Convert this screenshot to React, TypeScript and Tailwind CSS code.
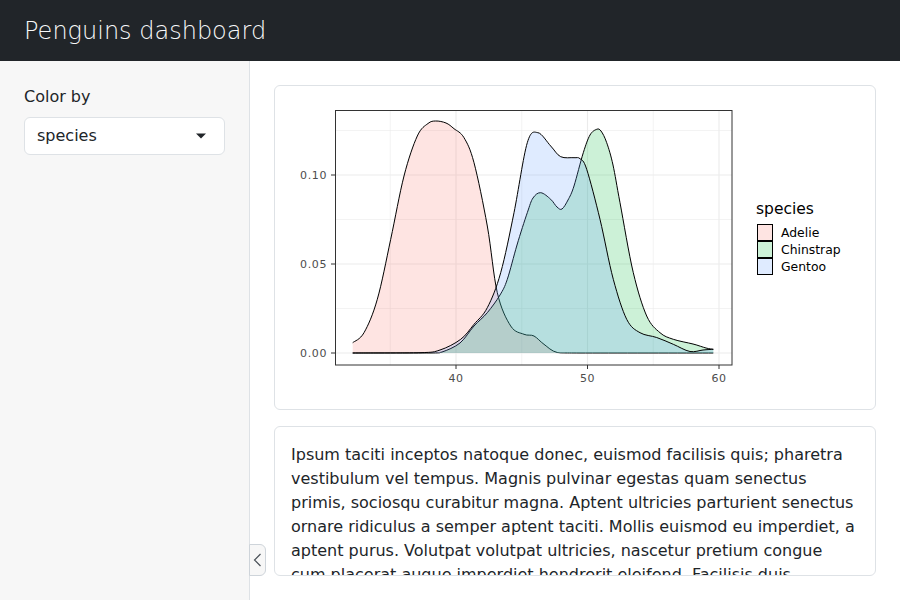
import React from "react"

type Pt = [number, number]

const BASE = 353

const adelie: Pt[] = [
  [352.7, 342.7], [364, 332.7], [377.3, 299.3], [390.7, 239.3], [404, 176], [417.3, 136],
  [428, 123.5], [435.7, 121], [446, 123], [454, 128.7], [464, 137.7], [474, 162.7],
  [487.3, 226], [497.3, 292.7], [510.7, 326], [524, 334.3], [534, 336], [544, 344.3],
  [557.3, 352.5], [580, 353], [713.3, 353],
]

const chinstrap: Pt[] = [
  [352.7, 353], [430, 353], [442, 352], [460, 343], [474, 326], [487.3, 312.7], [500, 295],
  [507.3, 279.3], [517, 245], [527.3, 212.7], [533, 198], [540.7, 192.7], [550.7, 199.3],
  [557, 207], [562, 209], [568, 200], [574, 186], [583.3, 152.7], [590, 135], [596.7, 129.3],
  [601, 131], [606.7, 142.7], [613, 165], [620, 202.7], [633.3, 272.7], [646.7, 316],
  [660, 332.7], [673.3, 339.3], [693, 344], [706, 348], [713.3, 349.3],
]

const gentoo: Pt[] = [
  [352.7, 353], [420, 352.7], [440, 350], [460.7, 339.3], [474, 324.3], [487.3, 307.7],
  [500.7, 272.7], [514, 212.7], [527.3, 142.7], [538, 132.7], [550.7, 146], [560.7, 156.7],
  [574, 157.7], [580, 158.7], [586.7, 169.3], [600, 219.3], [613.3, 279.3], [626.7, 319.3],
  [640, 332.7], [656.7, 337.5], [673.3, 344.3], [690, 351.5], [703, 350], [713.3, 349.3],
]

// catmull-rom through the points
function line(pts: Pt[]) {
  let d = `M${pts[0][0]},${pts[0][1]}`
  for (let i = 0; i < pts.length - 1; i++) {
    const p0 = pts[i - 1] || pts[i]
    const p1 = pts[i]
    const p2 = pts[i + 1]
    const p3 = pts[i + 2] || p2
    const c1x = p1[0] + (p2[0] - p0[0]) / 6
    const c1y = p1[1] + (p2[1] - p0[1]) / 6
    const c2x = p2[0] - (p3[0] - p1[0]) / 6
    const c2y = p2[1] - (p3[1] - p1[1]) / 6
    d += ` C${c1x.toFixed(1)},${Math.min(c1y, BASE).toFixed(1)} ${c2x.toFixed(1)},${Math.min(c2y, BASE).toFixed(1)} ${p2[0]},${p2[1]}`
  }
  return d
}

function area(pts: Pt[]) {
  return `${line(pts)} L${pts[pts.length - 1][0]},${BASE} L${pts[0][0]},${BASE} Z`
}

const groups = [
  { name: "Adelie", color: "#F8766D", pts: adelie },
  { name: "Chinstrap", color: "#00BA38", pts: chinstrap },
  { name: "Gentoo", color: "#619CFF", pts: gentoo },
]

const xMajor = [456, 587.5, 719]
const xMinor = [390.25, 521.75, 653.25]
const yMajor = [353, 264, 175]
const yMinor = [308.5, 219.5, 130.5]

function DensityPlot() {
  return (
    <svg width={600} height={323} viewBox="275 86 600 323" className="block">
      <rect x={335} y={110.5} width={397} height={254.5} fill="#fff" />
      {xMinor.map((x) => (
        <line key={x} x1={x} x2={x} y1={110.5} y2={365} stroke="#ebebeb" strokeWidth={0.6} />
      ))}
      {yMinor.map((y) => (
        <line key={y} x1={335} x2={732} y1={y} y2={y} stroke="#ebebeb" strokeWidth={0.6} />
      ))}
      {xMajor.map((x) => (
        <line key={x} x1={x} x2={x} y1={110.5} y2={365} stroke="#ebebeb" strokeWidth={1.1} />
      ))}
      {yMajor.map((y) => (
        <line key={y} x1={335} x2={732} y1={y} y2={y} stroke="#ebebeb" strokeWidth={1.1} />
      ))}
      {groups.map((g) => (
        <g key={g.name}>
          <path d={area(g.pts)} fill={g.color} fillOpacity={0.2} />
          <path d={line(g.pts)} fill="none" stroke="#000" strokeWidth={1} />
        </g>
      ))}
      <rect x={335.5} y={110.5} width={396.5} height={254.5} fill="none" stroke="#333" strokeWidth={1} />
      {yMajor.map((y, i) => (
        <g key={y}>
          <line x1={331} x2={335} y1={y} y2={y} stroke="#333" strokeWidth={1} />
          <text x={327} y={y + 4} textAnchor="end" fontSize={11} fill="#4d4d4d" letterSpacing={0.6} fontFamily="DejaVu Sans, sans-serif">
            {["0.00", "0.05", "0.10"][i]}
          </text>
        </g>
      ))}
      {xMajor.map((x, i) => (
        <g key={x}>
          <line x1={x} x2={x} y1={365} y2={369} stroke="#333" strokeWidth={1} />
          <text x={x} y={382} textAnchor="middle" fontSize={11} fill="#4d4d4d" letterSpacing={0.6} fontFamily="DejaVu Sans, sans-serif">
            {["40", "50", "60"][i]}
          </text>
        </g>
      ))}
      <text x={756} y={214} fontSize={15.5} fill="#000" fontFamily="DejaVu Sans, sans-serif">species</text>
      {groups.map((g, i) => (
        <g key={g.name}>
          <rect x={757.5} y={224.5 + i * 17} width={15} height={16} fill={g.color} fillOpacity={0.2} stroke="#000" strokeWidth={1} />
          <text x={781} y={237 + i * 17} fontSize={12.4} fill="#000" fontFamily="DejaVu Sans, sans-serif">{g.name}</text>
        </g>
      ))}
    </svg>
  )
}

const lorem =
  "Ipsum taciti inceptos natoque donec, euismod facilisis quis; pharetra vestibulum vel tempus. Magnis pulvinar egestas quam senectus primis, sociosqu curabitur magna. Aptent ultricies parturient senectus ornare ridiculus a semper aptent taciti. Mollis euismod eu imperdiet, a aptent purus. Volutpat volutpat ultricies, nascetur pretium congue cum placerat augue imperdiet hendrerit eleifend. Facilisis duis vulputate habitasse nisl quisque class nibh est. Porta vehicula malesuada sed, odio nostra hac cubilia fusce."

export default function App() {
  return (
    <div className="relative flex h-[600px] w-[900px] flex-col overflow-hidden bg-white font-['DejaVu_Sans',sans-serif] text-[#212529]">
      <header className="flex h-[61px] shrink-0 items-center bg-[#212529] px-6">
        <h1 className="text-[24px] font-extralight leading-none text-[#f8f9fa]">Penguins dashboard</h1>
      </header>
      <div className="flex min-h-0 flex-1">
        <aside className="w-[250px] shrink-0 border-r border-[#dee2e6] bg-[#f7f7f7] p-6">
          <div className="text-base leading-6">Color by</div>
          <div className="mt-2 flex h-[38px] items-center justify-between rounded-md border border-[#dee2e6] bg-white pl-3 pr-[18px]">
            <span className="text-base">species</span>
            <svg width="10" height="6" viewBox="0 0 10 6">
              <path d="M0 0.5 L10 0.5 L5 5.5 Z" fill="#212529" />
            </svg>
          </div>
        </aside>
        <main className="flex min-w-0 flex-1 flex-col gap-4 p-6">
          <div className="h-[325px] shrink-0 overflow-hidden rounded-md border border-[#dee2e6] bg-white">
            <DensityPlot />
          </div>
          <div className="min-h-0 flex-1 overflow-hidden rounded-md border border-[#dee2e6] bg-white px-4 pt-4">
            <p className="text-base leading-6">{lorem}</p>
          </div>
        </main>
      </div>
      <button className="absolute bottom-6 left-[249px] flex h-8 w-[17px] items-center justify-center rounded-r-md border border-[#ced4da] bg-[#f7f7f7]">
        <svg width="9" height="14" viewBox="0 0 9 14">
          <path d="M7.5 1 L1.5 7 L7.5 13" fill="none" stroke="#495057" strokeWidth="1.2" />
        </svg>
      </button>
    </div>
  )
}
